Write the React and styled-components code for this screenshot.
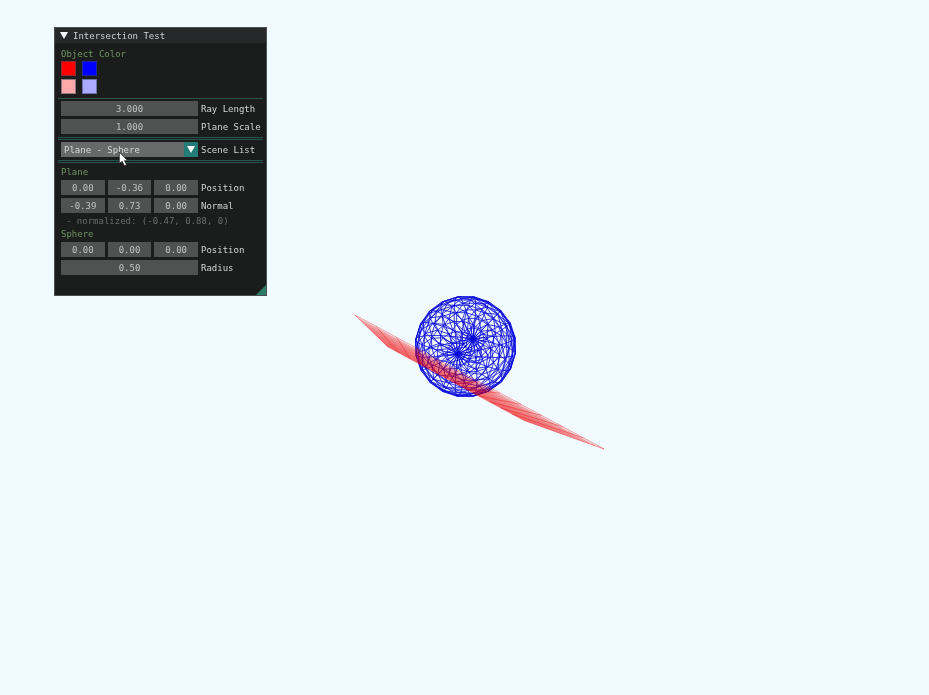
import React from 'react'
import styled, { createGlobalStyle } from 'styled-components'

const GlobalStyle = createGlobalStyle`
  html, body {
    margin: 0;
    padding: 0;
    background: #f0faff;
  }
`

const Page = styled.div`
  position: relative;
  width: 929px;
  height: 695px;
  overflow: hidden;
  padding: 27px 0 0 54px;
  box-sizing: border-box;
`

const Scene = styled.svg`
  position: absolute;
  left: 0;
  top: 0;
  filter: blur(0.4px);
`

const Panel = styled.div`
  position: relative;
  width: 213px;
  height: 269px;
  box-sizing: border-box;
  background: #1b1d1c;
  border: 1px solid #4a5052;
  font-family: "DejaVu Sans Mono", monospace;
  font-size: 9px;
  line-height: 12px;
  color: #d0d0d0;
  filter: blur(0.45px);
`

const TitleBar = styled.div`
  display: flex;
  align-items: center;
  gap: 5px;
  height: 15px;
  padding-left: 5px;
  background: #262829;
  color: #d0d0d0;
`

const Collapse = styled.span`
  width: 0;
  height: 0;
  border-left: 4px solid transparent;
  border-right: 4px solid transparent;
  border-top: 7px solid #f4f4f4;
`

const Body = styled.div`
  display: flex;
  flex-direction: column;
  padding: 5px 6px 0;
`

const Heading = styled.div`
  color: #6d9560;
  height: 12px;
  margin-bottom: ${p => p.$gap || 0}px;
`

const Swatches = styled.div`
  display: grid;
  grid-template-columns: 15px 15px;
  grid-auto-rows: 15px;
  gap: 3px 6px;
`

const Swatch = styled.div`
  background: ${p => p.$color};
  box-shadow: inset 0 0 0 1px rgba(60, 70, 90, 0.55);
`

const Rule = styled.div`
  height: 1px;
  margin: ${p => p.$top}px -3px ${p => p.$bottom}px;
  background: #26564c;
`

const Row = styled.div`
  display: flex;
  align-items: center;
  height: 15px;
  margin-bottom: ${p => p.$gap ?? 3}px;
`

const Fields = styled.div`
  display: grid;
  grid-auto-flow: column;
  grid-auto-columns: 1fr;
  gap: 3px;
  width: 137px;
  margin-right: 3px;
  flex: none;
`

const Field = styled.div`
  height: 15px;
  line-height: 16px;
  background: #505251;
  color: #c0c0c0;
  text-align: center;
`

const Label = styled.span`
  color: #d4d4d4;
  white-space: nowrap;
`

const Combo = styled.div`
  display: flex;
  width: 137px;
  height: 15px;
  margin-right: 3px;
  flex: none;
  background: #686a6a;
  color: #d8d8d8;
  line-height: 16px;
`

const ComboText = styled.span`
  flex: 1;
  padding-left: 3px;
`

const ComboArrow = styled.span`
  display: flex;
  align-items: center;
  justify-content: center;
  width: 14px;
  background: #237b78;

  &::after {
    content: '';
    border-left: 4px solid transparent;
    border-right: 4px solid transparent;
    border-top: 7px solid #f4f8f8;
  }
`

const Note = styled.div`
  height: 12px;
  margin: 0 0 1px 5px;
  color: #686e6e;
`

const Grip = styled.div`
  position: absolute;
  right: 0;
  bottom: 0;
  width: 0;
  height: 0;
  border-left: 10px solid transparent;
  border-bottom: 10px solid #2c7a68;
`

const Pointer = styled.svg`
  position: absolute;
  left: 118px;
  top: 151px;
`

const CENTER = [465.5, 346.5]
const RADIUS = 50.5

function spherePaths() {
  // triangulated UV sphere, axis nearly faces the camera
  const tip = 1.36
  const roll = 0.78
  const project = (lat, lon) => {
    const x = Math.cos(lat) * Math.cos(lon)
    const y = Math.sin(lat)
    const z = Math.cos(lat) * Math.sin(lon)
    const y1 = y * Math.cos(tip) - z * Math.sin(tip)
    const x2 = x * Math.cos(roll) - y1 * Math.sin(roll)
    const y2 = x * Math.sin(roll) + y1 * Math.cos(roll)
    return (CENTER[0] + x2 * RADIUS).toFixed(1) + ' ' + (CENTER[1] + y2 * RADIUS).toFixed(1)
  }
  const nLat = 14
  const nLon = 20
  let d = ''
  for (let i = 0; i < nLat; i++) {
    const lat0 = -Math.PI / 2 + (i * Math.PI) / nLat
    const lat1 = -Math.PI / 2 + ((i + 1) * Math.PI) / nLat
    for (let j = 0; j < nLon; j++) {
      const lon0 = (j * 2 * Math.PI) / nLon
      const lon1 = ((j + 1) * 2 * Math.PI) / nLon
      const a = project(lat0, lon0)
      const b = project(lat0, lon1)
      const c = project(lat1, lon0)
      d += `M${c}L${a}L${b}L${c}`
    }
  }
  return d
}

function planePaths() {
  const A = [355, 315]
  const B = [388, 347]
  const C = [523, 420]
  const D = [604, 449]
  const lerp = (p, q, t) => [p[0] + (q[0] - p[0]) * t, p[1] + (q[1] - p[1]) * t]
  let d = ''
  // long lines crowd toward the far edge
  const long = 22
  for (let i = 0; i <= long; i++) {
    const t = Math.pow(i / long, 0.7)
    const p1 = lerp(A, B, t)
    const p2 = lerp(D, C, t)
    d += `M${p1[0]} ${p1[1]}L${p2[0]} ${p2[1]}`
  }
  const cross = 12
  for (let i = 0; i <= cross; i++) {
    const t = i / cross
    const p3 = lerp(A, D, t)
    const p4 = lerp(B, C, t)
    d += `M${p3[0]} ${p3[1]}L${p4[0]} ${p4[1]}`
  }
  return d
}

const swatchColors = ['#ff0000', '#0000ff', '#ffaaaa', '#aaaaff']

function Vector({ values, label, gap }) {
  return (
    <Row $gap={gap}>
      <Fields>
        {values.map((v, i) => (
          <Field key={i}>{v}</Field>
        ))}
      </Fields>
      <Label>{label}</Label>
    </Row>
  )
}

export default function App() {
  return (
    <Page>
      <GlobalStyle />
      <Scene width="929" height="695" viewBox="0 0 929 695">
        <path d={spherePaths()} fill="none" stroke="#0808dc" strokeWidth="0.8" />
        <path d={planePaths()} fill="none" stroke="#f00000" strokeWidth="0.38" />
      </Scene>
      <Panel>
        <TitleBar>
          <Collapse />
          Intersection Test
        </TitleBar>
        <Body>
          <Heading $gap={1}>Object Color</Heading>
          <Swatches>
            {swatchColors.map(c => (
              <Swatch key={c} $color={c} />
            ))}
          </Swatches>
          <Rule $top={4} $bottom={2} />
          <Vector values={['3.000']} label="Ray Length" />
          <Vector values={['1.000']} label="Plane Scale" gap={3} />
          <Rule $top={0} $bottom={1} />
          <Rule $top={0} $bottom={2} />
          <Row>
            <Combo>
              <ComboText>Plane - Sphere</ComboText>
              <ComboArrow />
            </Combo>
            <Label>Scene List</Label>
          </Row>
          <Rule $top={0} $bottom={1} />
          <Rule $top={0} $bottom={3} />
          <Heading $gap={2}>Plane</Heading>
          <Vector values={['0.00', '-0.36', '0.00']} label="Position" />
          <Vector values={['-0.39', '0.73', '0.00']} label="Normal" gap={2} />
          <Note>- normalized: (-0.47, 0.88, 0)</Note>
          <Heading $gap={2}>Sphere</Heading>
          <Vector values={['0.00', '0.00', '0.00']} label="Position" />
          <Vector values={['0.50']} label="Radius" />
        </Body>
        <Grip />
      </Panel>
      <Pointer width="14" height="16" viewBox="0 0 12 14">
        <path d="M1 1L1 11L3.5 9L5.5 13L7.5 12L5.5 8.5L8.5 8.5Z" fill="#fff" stroke="#222" strokeWidth="0.7" />
      </Pointer>
    </Page>
  )
}
